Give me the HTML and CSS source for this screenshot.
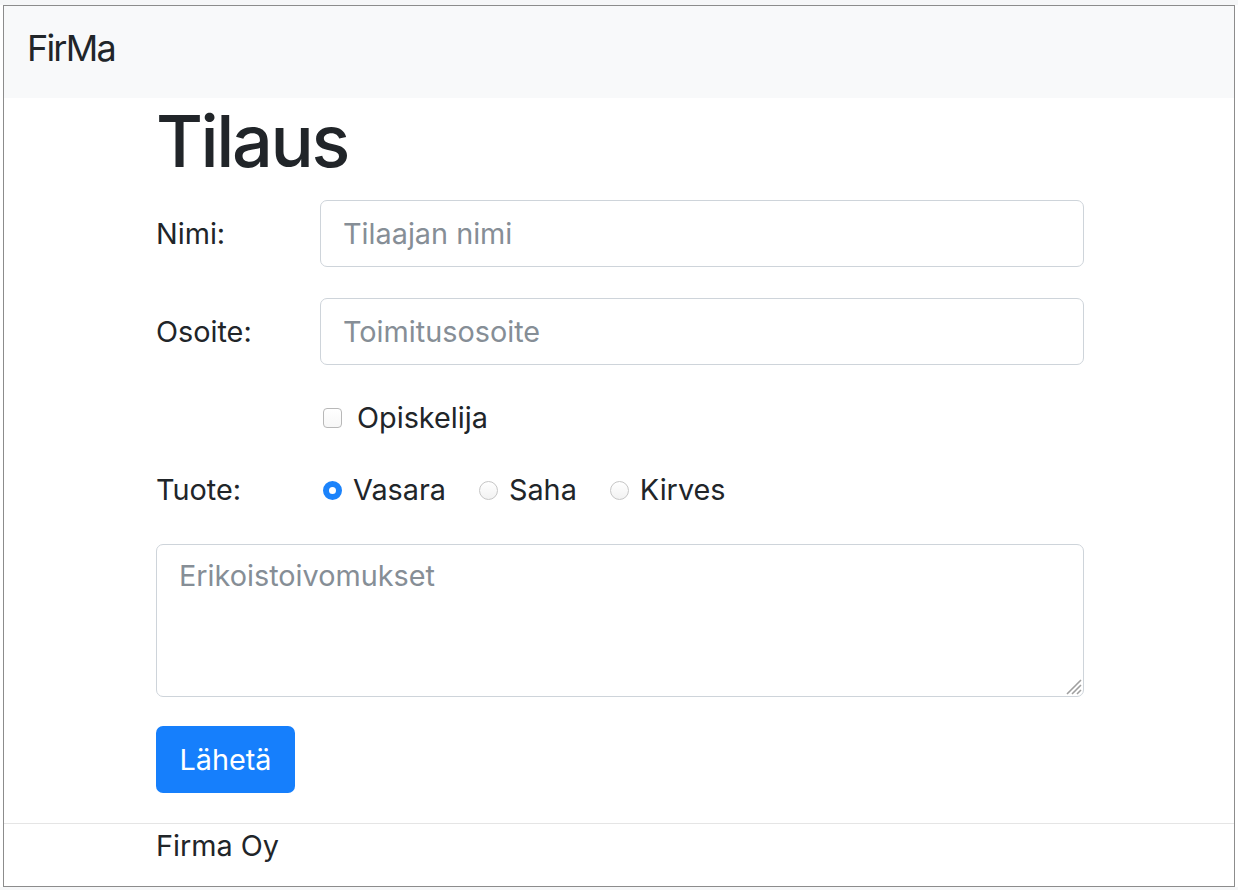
FILE: index.html
```html
<!DOCTYPE html>
<html lang="fi">
<head>
<meta charset="utf-8">
<title>Tilaus</title>
<link rel="stylesheet" href="styles.css">
</head>
<body>
<div class="window">
  <nav class="navbar"><a class="brand" href="#">FirMa</a></nav>
  <main class="container">
    <h1 class="title">Tilaus</h1>
    <form class="order">
      <div class="row">
        <label class="label" for="nimi">Nimi:</label>
        <input class="control" id="nimi" type="text" placeholder="Tilaajan nimi">
      </div>
      <div class="row">
        <label class="label" for="osoite">Osoite:</label>
        <input class="control" id="osoite" type="text" placeholder="Toimitusosoite">
      </div>
      <div class="row row-check">
        <span class="label"></span>
        <label class="check"><input class="checkbox" type="checkbox"><span>Opiskelija</span></label>
      </div>
      <div class="row row-radio">
        <span class="label">Tuote:</span>
        <div class="radios">
          <label class="radio-item"><input class="radio" type="radio" name="tuote" checked><span>Vasara</span></label>
          <label class="radio-item"><input class="radio" type="radio" name="tuote"><span>Saha</span></label>
          <label class="radio-item"><input class="radio" type="radio" name="tuote"><span>Kirves</span></label>
        </div>
      </div>
      <div class="textarea-wrap">
        <textarea class="textarea" placeholder="Erikoistoivomukset"></textarea>
        <svg class="grip" width="18" height="18" viewBox="0 0 18 18" aria-hidden="true">
          <path d="M17 3 L3 17 M17 8 L8 17 M17 13 L13 17" stroke="#a0a0a0" stroke-width="1.6" fill="none"/>
        </svg>
      </div>
      <button class="btn" type="submit">Lähetä</button>
    </form>
  </main>
  <footer class="footer"><div class="container">Firma Oy</div></footer>
</div>
</body>
</html>
```
FILE: styles.css
```css
* { box-sizing: border-box; }
html, body { margin: 0; }
body {
  background: linear-gradient(#f6f7f8 5px, #ffffff 5px);
  font-family: Inter, "Liberation Sans", sans-serif;
  color: #212529;
  font-size: 28.8px;
  line-height: 43px;
}
.window {
  margin: 5px 0 0 3px;
  width: 1232px;
  height: 882px;
  border: 1px solid #8c8c8c;
  background: #fff;
  overflow: hidden;
}
.navbar {
  height: 92px;
  background: #f8f9fa;
  padding: 15px 23px 0;
}
.brand {
  font-size: 36px;
  line-height: 54px;
  letter-spacing: -1.8px;
  color: #212529;
  text-decoration: none;
}
.container {
  margin-left: 152px;
  width: 928px;
}
.title {
  margin: 0 0 16px;
  font-size: 72px;
  line-height: 86px;
  font-weight: 500;
  letter-spacing: -2.4px;
}
.order { margin: 0; }
.row {
  display: grid;
  grid-template-columns: 164px 1fr;
  align-items: center;
  margin-bottom: 31px;
}
.row-check { margin-bottom: 29px; }
.row-radio { margin-bottom: 33px; }
.label { color: #212529; }
.control {
  height: 67px;
  width: 100%;
  border: 1px solid #ced4da;
  border-radius: 7px;
  padding: 0 22px;
  font: inherit;
  color: #495057;
  background: #fff;
}
.control::placeholder, .textarea::placeholder { color: #868e96; opacity: 1; }
.check, .radio-item {
  display: flex;
  align-items: center;
}
.checkbox {
  appearance: none;
  -webkit-appearance: none;
  width: 19px;
  height: 20px;
  margin: 0 15px 0 3px;
  border: 1px solid #b8b8b8;
  border-radius: 4px;
  background: linear-gradient(#ffffff, #f7f7f7);
}
.radios { display: flex; }
.radio-item { margin-right: 30px; }
.radio {
  appearance: none;
  -webkit-appearance: none;
  width: 19px;
  height: 19px;
  margin: 2px 11px 0 3px;
  border-radius: 50%;
  border: 1px solid #c6c6c6;
  background: linear-gradient(#ffffff, #f2f2f2);
}
.radio:checked {
  border: 6px solid #1b83fb;
  background: #fff;
}
.textarea-wrap { position: relative; }
.textarea {
  display: block;
  width: 100%;
  height: 153px;
  border: 1px solid #ced4da;
  border-radius: 7px;
  padding: 9px 22px;
  font: inherit;
  resize: none;
  color: #495057;
}
.grip {
  position: absolute;
  right: 2px;
  bottom: 2px;
}
.btn {
  margin-top: 29px;
  width: 139px;
  height: 67px;
  border: 0;
  border-radius: 7px;
  background: #167ffc;
  color: #fff;
  font: inherit;
  padding: 0;
}
.footer {
  margin-top: 30px;
  border-top: 1px solid #e5e5e5;
}
.footer .container { line-height: 43px; }
```
